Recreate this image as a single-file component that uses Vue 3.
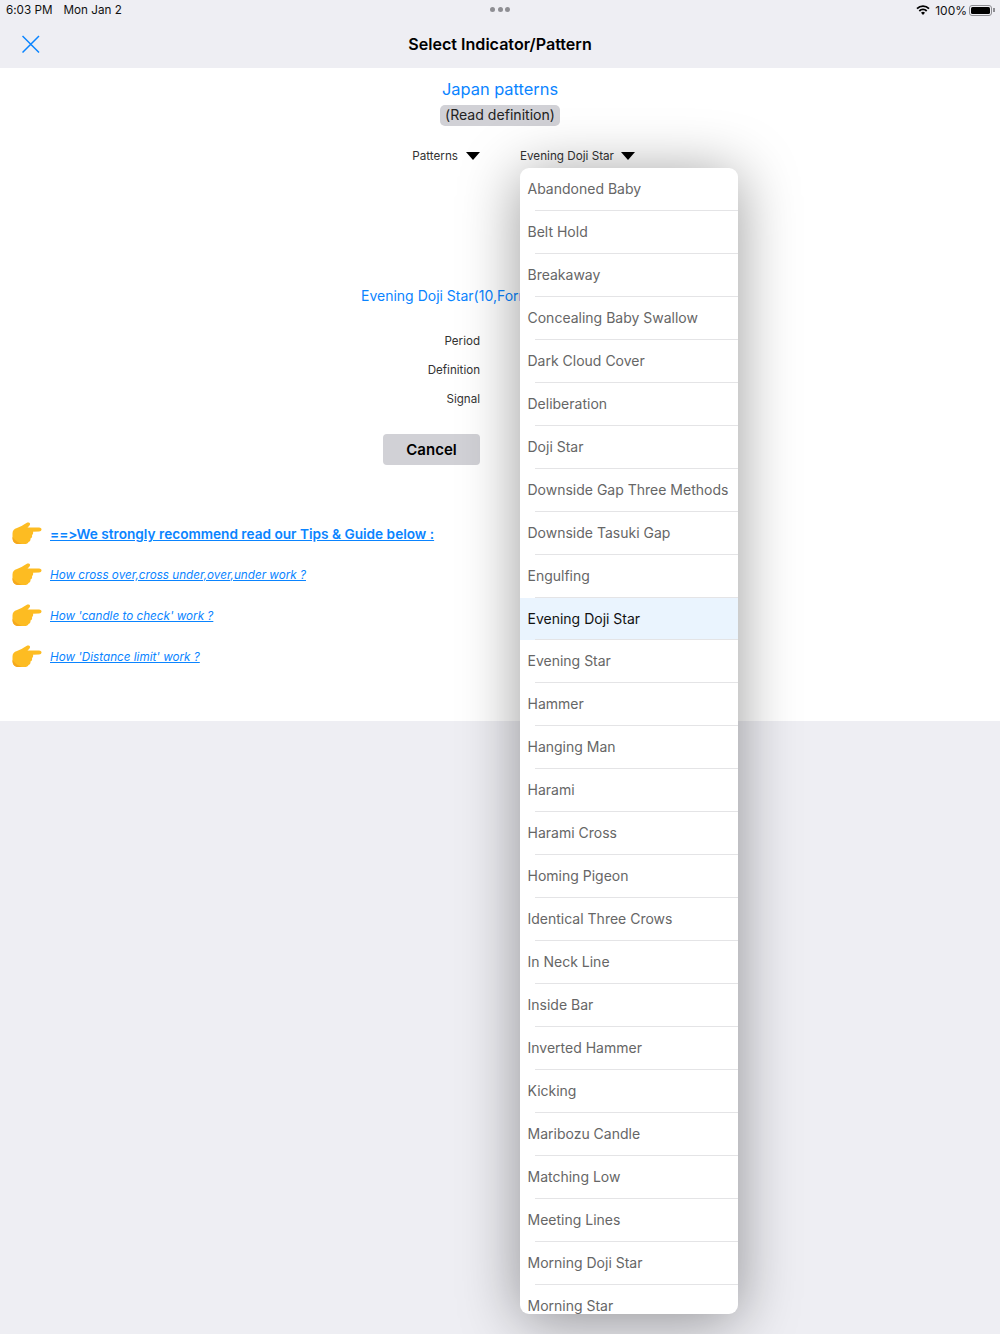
<template>
  <div class="page">
    <div class="status-bar">
      <span class="status-time">6:03 PM</span>
      <span class="status-date">Mon Jan 2</span>
      <div class="multitask-dots"><i></i><i></i><i></i></div>
      <div class="status-right">
        <svg class="wifi" width="14" height="10" viewBox="0 0 14 10">
          <path d="M1 3.700A8.500 8.500 0 0 1 13 3.700" stroke="#000" stroke-width="1.800" fill="none" />
          <path d="M3.300 6A5.200 5.200 0 0 1 10.700 6" stroke="#000" stroke-width="1.800" fill="none" />
          <path d="M5 7.700a2.900 2.900 0 0 1 4 0L7 10z" fill="#000" />
        </svg>
        <span>100%</span>
        <div class="battery"><div class="battery-fill"></div></div>
        <div class="battery-cap"></div>
      </div>
    </div>

    <div class="nav-bar">
      <svg class="close-icon" width="18" height="18" viewBox="0 0 18 18">
        <path d="M.5 1l16.500 16.500M17 1L.5 17.500" stroke="#0a84ff" stroke-width="1.500" fill="none" />
      </svg>
      <div class="nav-title">Select Indicator/Pattern</div>
    </div>

    <div class="content">
      <div class="heading">Japan patterns</div>
      <div class="read-wrap"><span class="read-btn">(Read definition)</span></div>

      <div class="picker-row">
        <div class="picker">
          <span>Patterns</span>
          <span class="caret"></span>
        </div>
        <div class="picker picker-right">
          <span>Evening Doji Star</span>
          <span class="caret"></span>
          <ul class="dropdown">
            <li v-for="item in patterns" :key="item" :class="{ selected: item === selected }">
              {{ item }}
            </li>
          </ul>
        </div>
      </div>

      <div class="formula">Evening Doji Star(10,Forming)</div>

      <div class="fields">
        <div v-for="label in fields" :key="label" class="field">{{ label }}</div>
        <button class="cancel">Cancel</button>
      </div>

      <div class="links">
        <div v-for="(link, i) in links" :key="link" class="link-row">
          <svg class="hand" width="30" height="23" viewBox="0 0 30 23">
            <path d="M.5 11.500C.5 8.500 2 7 5 6 8 5 11 3 14.500 1 16 0 18.500.5 18 2.500 17.700 3.700 16.500 4.700 15.500 5.500L27 5.600C28.800 5.600 29.600 6.600 29.500 7.600 29.400 8.800 28.500 9.500 27 9.500L21 9.800C21.500 11 21 12.500 20 13 20.500 14.500 19.800 16 18.500 16.500 18.800 18 18 19.500 16.500 20 16 21.500 14.500 22 12.500 22L6.500 22C2.500 22 .5 19.500 .5 16Z" fill="#fdbc22" />
            <path d="M.5 15C.5 19.500 2.500 22 6.500 22L10 22C7 21 3.500 19 .5 15Z" fill="#f5a81e" />
          </svg>
          <a class="link" :class="{ 'link-main': i === 0 }">{{ link }}</a>
        </div>
      </div>
    </div>
  </div>
</template>

<script setup>
const selected = 'Evening Doji Star'

const patterns = [
  'Abandoned Baby',
  'Belt Hold',
  'Breakaway',
  'Concealing Baby Swallow',
  'Dark Cloud Cover',
  'Deliberation',
  'Doji Star',
  'Downside Gap Three Methods',
  'Downside Tasuki Gap',
  'Engulfing',
  'Evening Doji Star',
  'Evening Star',
  'Hammer',
  'Hanging Man',
  'Harami',
  'Harami Cross',
  'Homing Pigeon',
  'Identical Three Crows',
  'In Neck Line',
  'Inside Bar',
  'Inverted Hammer',
  'Kicking',
  'Maribozu Candle',
  'Matching Low',
  'Meeting Lines',
  'Morning Doji Star',
  'Morning Star'
]

const fields = ['Period', 'Definition', 'Signal']

const links = [
  '==>We strongly recommend read our Tips & Guide below :',
  'How cross over,cross under,over,under work ?',
  "How 'candle to check' work ?",
  "How 'Distance limit' work ?"
]
</script>

<style scoped>
.page {
  min-height: 1334px;
  background: #eeeef3;
  font-family: Inter, "Liberation Sans", sans-serif;
  font-variant-ligatures: none;
  font-feature-settings: "calt" 0;
  color: #000;
  overflow: hidden;
}

.status-bar {
  height: 20px;
  padding: 0 5px 0 6px;
  box-sizing: border-box;
  display: flex;
  align-items: center;
  font-size: 11.700px;
  color: #111;
  position: relative;
}

.status-date {
  margin-left: 11px;
}

.multitask-dots {
  position: absolute;
  left: 490px;
  top: 7px;
  display: flex;
  gap: 2.500px;
}

.multitask-dots i {
  width: 5px;
  height: 5px;
  border-radius: 50%;
  background: #8e8e93;
}

.status-right {
  margin-left: auto;
  display: flex;
  align-items: center;
  font-size: 12px;
}

.wifi {
  margin-right: 5px;
}

.battery {
  width: 23px;
  height: 11px;
  margin-left: 2px;
  border: 1px solid #8e8e93;
  border-radius: 3px;
  padding: 1px;
  box-sizing: border-box;
}

.battery-fill {
  height: 100%;
  background: #000;
  border-radius: 1.500px;
}

.battery-cap {
  width: 2px;
  height: 4px;
  margin-left: 1px;
  background: #8e8e93;
}

.nav-bar {
  height: 48px;
  display: flex;
  align-items: center;
  justify-content: center;
  position: relative;
}

.close-icon {
  position: absolute;
  left: 22px;
  top: 15px;
}

.nav-title {
  font-size: 16.100px;
  font-weight: 600;
}

.content {
  height: 653px;
  background: #fff;
  padding-top: 10px;
  box-sizing: border-box;
}

.heading {
  text-align: center;
  font-size: 16.400px;
  line-height: 22px;
  color: #0a84ff;
}

.read-wrap {
  display: flex;
  justify-content: center;
  margin-top: 5px;
  height: 22px;
}

.read-btn {
  width: 120px;
  height: 21px;
  line-height: 20px;
  text-align: center;
  background: #d1d1d6;
  border-radius: 5px;
  font-size: 14.100px;
  color: #222;
}

.picker-row {
  display: grid;
  grid-template-columns: 480px 1fr;
  column-gap: 40px;
  margin-top: 19px;
  height: 20px;
  font-size: 11.700px;
  color: #333;
}

.picker {
  display: flex;
  align-items: center;
  justify-content: flex-end;
  gap: 8px;
}

.picker-right {
  justify-content: flex-start;
  position: relative;
  gap: 7px;
}

.caret {
  width: 0;
  height: 0;
  border-left: 7px solid transparent;
  border-right: 7px solid transparent;
  border-top: 8px solid #000;
  margin-bottom: 1px;
}

.dropdown {
  position: absolute;
  left: 0;
  top: 22px;
  width: 218px;
  height: 1146px;
  margin: 0;
  padding: 0;
  list-style: none;
  overflow: hidden;
  background: #fff;
  border-radius: 9px;
  box-shadow: 0 6px 60px rgba(0, 0, 0, 0.4);
  z-index: 2;
}

.dropdown li {
  height: 42.960px;
  line-height: 42px;
  padding-left: 7.500px;
  box-sizing: border-box;
  font-size: 14px;
  color: #666;
  position: relative;
  white-space: nowrap;
}

.dropdown li::after {
  content: "";
  position: absolute;
  left: 15px;
  right: 0;
  bottom: 0;
  height: 1px;
  background: #e4e4e6;
}

.dropdown li.selected {
  background: #eaf4fe;
  color: #111;
}

.formula {
  width: 278px;
  margin: 120px auto 0;
  font-size: 14px;
  line-height: 20px;
  color: #0a84ff;
  white-space: nowrap;
}

.fields {
  width: 480px;
  margin-top: 21px;
  display: flex;
  flex-direction: column;
  align-items: flex-end;
}

.field {
  height: 29px;
  line-height: 29px;
  font-size: 11.600px;
  color: #333;
}

.cancel {
  width: 97px;
  height: 31px;
  margin-top: 20px;
  border: 0;
  border-radius: 4px;
  background: #d1d1d6;
  font-family: inherit;
  font-size: 15px;
  font-weight: 600;
  color: #000;
}

.links {
  margin-top: 48px;
  padding-left: 12px;
}

.link-row {
  height: 41px;
  display: flex;
  align-items: center;
  gap: 8px;
}

.link {
  color: #0a84ff;
  font-size: 11.700px;
  font-style: italic;
  text-decoration: underline;
}

.link-main {
  font-size: 13.650px;
  font-style: normal;
  font-weight: 600;
}
</style>
